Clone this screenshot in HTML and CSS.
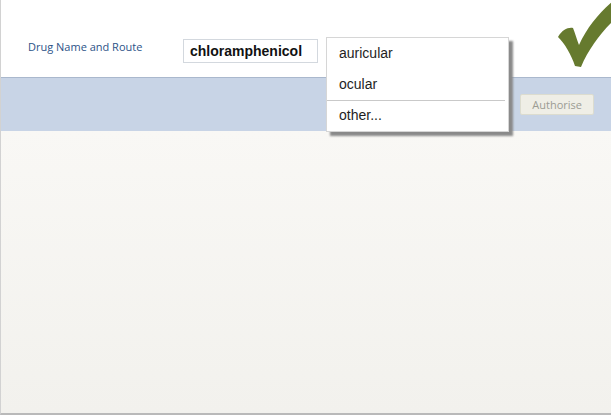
FILE: index.html
```html
<!DOCTYPE html>
<html>
<head>
<meta charset="utf-8">
<link rel="stylesheet" href="styles.css">
</head>
<body>
<div class="frame">
  <div class="tabline"></div>
  <header class="header">
    <label class="label">Drug Name and Route</label>
    <div class="input">chloramphenicol</div>
    <ul class="menu">
      <li class="item">auricular</li>
      <li class="item">ocular</li>
      <li class="item sep">other...</li>
    </ul>
    <svg class="tick" width="56" height="70" viewBox="555 0 56 70">
      <path d="M558,37 C562,30 568,27 573,28 C575,33 577,40 579,45 C587,28 598,14 612,2 L612,22 C600,34 588,50 581,67 L575,66 C571,54 565,44 558,37 Z" fill="#667a2e"/>
    </svg>
  </header>
  <div class="band">
    <button class="btn hidden-btn">Cancel</button>
    <button class="btn">Authorise</button>
  </div>
  <main class="body"></main>
</div>
</body>
</html>
```
FILE: styles.css
```css
html, body {
  margin: 0;
  padding: 0;
  background: #ffffff;
}
.frame {
  width: 611px;
  height: 415px;
  box-sizing: border-box;
  border-left: 1px solid #d2d2d2;
  border-bottom: 2px solid #b9b9b9;
  display: flex;
  flex-direction: column;
  position: relative;
  overflow: hidden;
  font-family: "Liberation Sans", Arial, sans-serif;
}
.tabline {
  position: absolute;
  left: 82px;
  right: 0;
  top: 0;
  height: 1px;
  background: #d4d4d4;
}
.header {
  height: 77px;
  background: #ffffff;
  display: flex;
  align-items: flex-start;
  position: relative;
  flex: none;
}
.label {
  flex: none;
  width: 155px;
  font-family: "Open Sans", "DejaVu Sans", sans-serif;
  font-size: 11px;
  color: #2d5388;
  margin: 39px 0 0 27px;
}
.input {
  flex: none;
  margin: 39px 0 0 0;
  width: 135px;
  height: 24px;
  box-sizing: border-box;
  border: 1px solid #d3d8de;
  padding: 3px 0 0 6px;
  font-weight: bold;
  font-size: 14px;
  color: #111;
  background: #fff;
}
.menu {
  position: absolute;
  left: 325px;
  top: 37px;
  width: 181px;
  margin: 0;
  padding: 0;
  list-style: none;
  background: #ffffff;
  border: 1px solid #d6d6d6;
  box-shadow: 4px 4px 2px #8a8a8a;
  z-index: 2;
}
.item {
  height: 31px;
  line-height: 31px;
  padding-left: 12px;
  font-size: 14px;
  color: #1e1e1e;
}
.item.sep {
  border-top: 1px solid #c9c9c9;
  margin-right: 3px;
  height: 30px;
  line-height: 28px;
}
.tick {
  position: absolute;
  right: 0;
  top: 0;
}
.band {
  height: 54px;
  box-sizing: border-box;
  background: #c8d4e6;
  border-top: 1px solid #aab8cd;
  display: flex;
  justify-content: flex-end;
  align-items: flex-start;
  gap: 9px;
  padding: 16px 17px 0 0;
  flex: none;
}
.btn {
  height: 21px;
  padding: 0 11px;
  border: 1px solid #dcdccf;
  border-radius: 2px;
  background: #efeee6;
  color: #9c9c94;
  font-family: "Open Sans", "DejaVu Sans", sans-serif;
  font-size: 11px;
  line-height: 18px;
}
.hidden-btn {
  width: 60px;
}
.body {
  flex: 1;
  background: linear-gradient(#f9f8f5, #f2f1ed);
}
```
